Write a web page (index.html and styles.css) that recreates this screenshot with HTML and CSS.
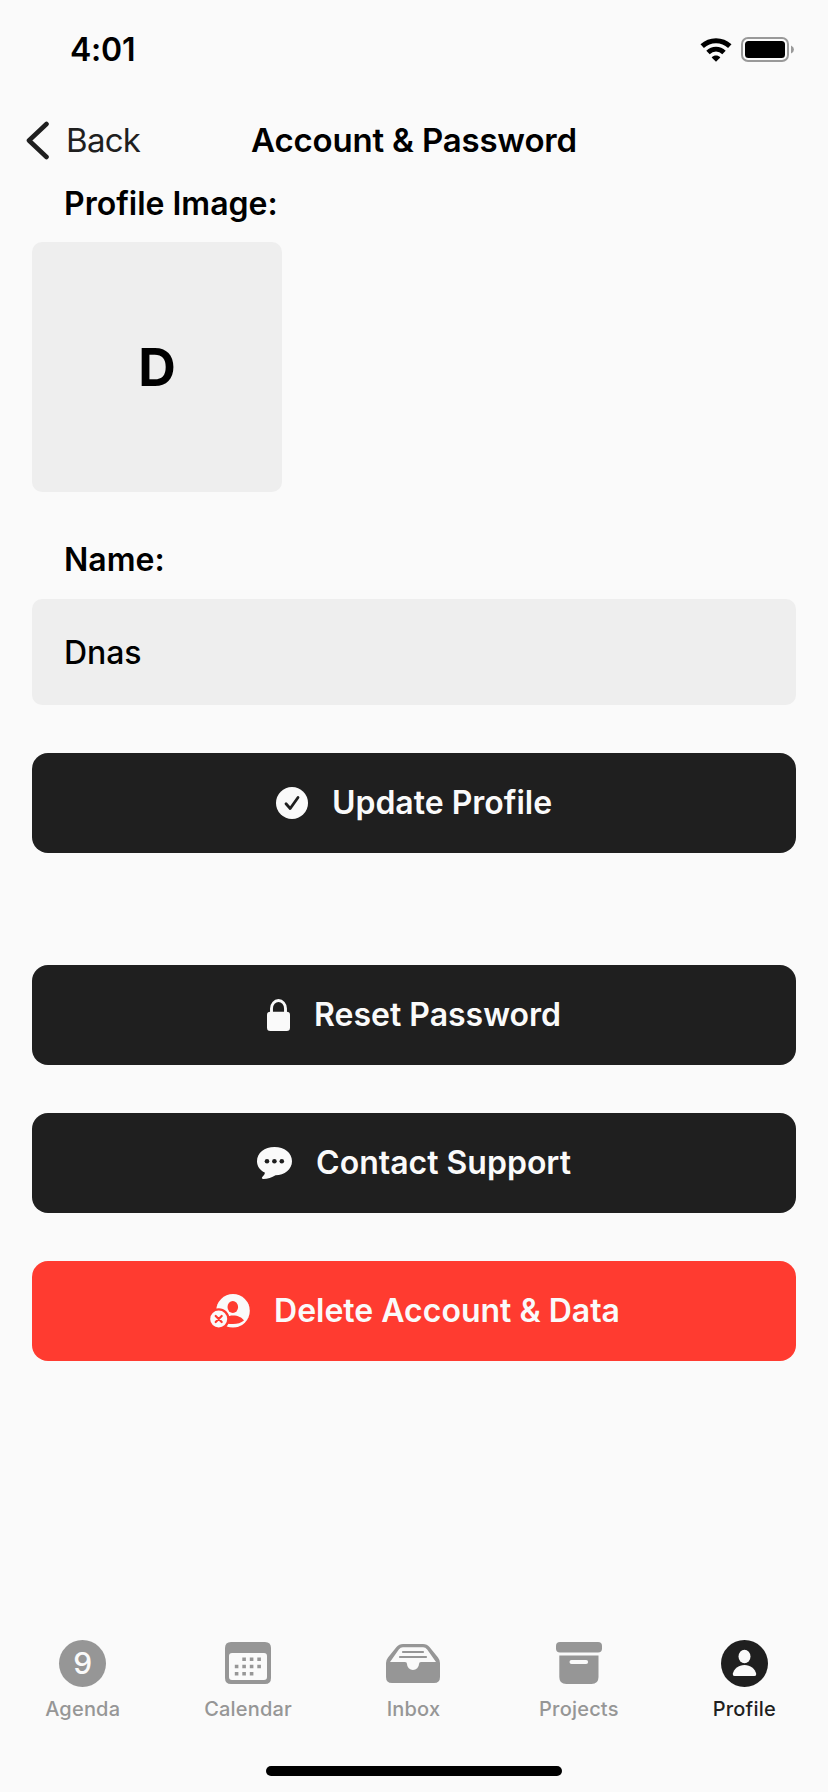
FILE: index.html
```html
<!DOCTYPE html>
<html lang="en">
<head>
<meta charset="utf-8">
<title>Account &amp; Password</title>
<link rel="stylesheet" href="styles.css">
</head>
<body>
<div class="screen">
  <div class="status">
    <span class="time">4:01</span>
    <span class="indicators">
      <svg width="32" height="24" viewBox="0 0 32 24"><path d="M2.2 8.2C10 .9 22 .9 29.8 8.2" fill="none" stroke="#000" stroke-width="5"/><path d="M8 14.5C12.5 10 19.500 10 24 14.500" fill="none" stroke="#000" stroke-width="4.800"/><path d="M11.700 19.400C14 17 18 17 20.300 19.400L16 23.800Z"/></svg>
      <svg width="53" height="25" viewBox="0 0 53 25"><rect x="1" y="1" width="46" height="23" rx="6" fill="none" stroke="#999" stroke-width="2"/><rect x="4" y="4" width="40" height="17" rx="3.500"/><path d="M50 8.500Q53 10 53 12.500T50 16.500Z" fill="#999"/></svg>
    </span>
  </div>
  <header class="nav">
    <a class="back"><svg width="24" height="39" viewBox="0 0 24 39"><path d="M20.500 3 3 19.500l17.500 16.500" fill="none" stroke="#1f1f1f" stroke-width="4.600" stroke-linecap="round" stroke-linejoin="round"/></svg><span>Back</span></a>
    <h1 class="title">Account &amp; Password</h1>
  </header>
  <main class="content">
    <div class="label label-image">Profile Image:</div>
    <div class="avatar">D</div>
    <div class="label label-name">Name:</div>
    <div class="field">Dnas</div>
    <button class="btn btn-update"><svg width="32" height="32" viewBox="0 0 32 32"><circle cx="16" cy="16" r="16" fill="#fafafa"/><path d="M10 16.800 14.200 21.500 22 10.500" fill="none" stroke="#1f1f1f" stroke-width="2.800" stroke-linecap="round" stroke-linejoin="round"/></svg><span>Update Profile</span></button>
    <button class="btn"><svg width="23" height="32" viewBox="0 0 23 32"><path d="M4.500 14V9.500a7 8 0 0 1 14 0V14" fill="none" stroke="#fafafa" stroke-width="2.900"/><rect y="12.800" width="23" height="19.200" rx="3.300" fill="#fafafa"/></svg><span>Reset Password</span></button>
    <button class="btn"><svg width="35" height="32" viewBox="0 0 35 32"><path d="M17.500 0C27.500 0 35 6 35 14.200S27.500 28 18.500 28.200C15 30.500 10.500 32 6.500 32 4.500 32 4.500 30.800 5.500 29.800 7.200 28 8 26.800 7.800 25.600 3 23.300 0 19.300 0 14.200 0 6 7.500 0 17.500 0Z" fill="#fafafa"/><g fill="#1f1f1f"><circle cx="10" cy="14.200" r="2.300"/><circle cx="17.400" cy="14.200" r="2.300"/><circle cx="24.800" cy="14.200" r="2.300"/></g></svg><span>Contact Support</span></button>
    <button class="btn btn-danger"><svg width="40" height="34" viewBox="0 0 40 34"><circle cx="23" cy="16.800" r="16.800" fill="#fafafa"/><ellipse cx="22.800" cy="13" rx="5.300" ry="6" fill="#ff3b30"/><path d="M12 28C14 23.500 18 21.500 23 21.500S32 23.500 34 26.500C31 29 27.500 30 23 30S15 29.500 12 28Z" fill="#ff3b30"/><circle cx="8.700" cy="25" r="10.800" fill="#ff3b30"/><circle cx="8.700" cy="25" r="8.500" fill="#fafafa"/><path d="m5.700 22 6 6m0-6-6 6" stroke="#ff3b30" stroke-width="2.200" stroke-linecap="round"/></svg><span>Delete Account &amp; Data</span></button>
  </main>
  <nav class="tabs">
    <a class="tab"><span class="tab-icon tab-round"><span class="day">9</span></span><span>Agenda</span></a>
    <a class="tab"><span class="tab-icon"><svg width="46" height="42" viewBox="0 0 46 42"><path fill="#969696" fill-rule="evenodd" d="M6 0H40Q46 0 46 6V36Q46 42 40 42H6Q0 42 0 36V6Q0 0 6 0ZM7 11Q4 11 4 14V35Q4 38 7 38H39Q42 38 42 35V14Q42 11 39 11Z"/><path d="M17.300 17.200H36M9.800 24.500H36M9.800 31.800H30" fill="none" stroke="#969696" stroke-width="3.600" stroke-dasharray="3.600 3.900"/></svg></span><span>Calendar</span></a>
    <a class="tab"><span class="tab-icon"><svg width="54" height="39" viewBox="0 0 54 39"><path fill="#969696" fill-rule="evenodd" d="M17 0H37Q41 0 43.500 3L52 13.500Q54 16 54 19V33Q54 39 48 39H6Q0 39 0 33V19Q0 16 2 13.500L10.500 3Q13 0 17 0ZM17 3.200Q14.500 3.200 12.800 5.400L4 18H19Q21 18 21 20A6 6 0 0 0 33 20Q33 18 35 18H50L41.200 5.400Q39.500 3.200 37 3.200Z"/><path d="M17 8H37M14 13H40" stroke="#969696" stroke-width="2.200" stroke-linecap="round"/></svg></span><span>Inbox</span></a>
    <a class="tab"><span class="tab-icon"><svg width="46" height="42" viewBox="0 0 46 42"><rect width="46" height="10.500" rx="4" fill="#969696"/><path fill="#969696" d="M3.300 13.500H42.500V35Q42.500 42 35.500 42H10.300Q3.300 42 3.300 35Z"/><rect x="13.500" y="18" width="18.600" height="4" rx="2" fill="#fafafa"/></svg></span><span>Projects</span></a>
    <a class="tab tab-active"><span class="tab-icon tab-round"><svg width="47" height="47" viewBox="0 0 47 47"><circle cx="23.500" cy="23.500" r="23.500" fill="#1f1f1f"/><ellipse cx="23.500" cy="16.500" rx="6" ry="6.700" fill="#fafafa"/><path d="M13.500 36Q11.500 36 11.800 33.800C13 28.500 17.500 25 23.500 25S34 28.500 35.200 33.800Q35.500 36 33.500 36Z" fill="#fafafa"/></svg></span><span>Profile</span></a>
  </nav>
  <div class="home"></div>
</div>
</body>
</html>
```
FILE: styles.css
```css
* { box-sizing: border-box; }
body { margin: 0; background: #fafafa; }
.screen {
  width: 828px;
  height: 1792px;
  display: flex;
  flex-direction: column;
  background: #fafafa;
  color: #000;
  font-family: Inter, sans-serif;
}
.status {
  height: 99px;
  padding: 0 34px 0 70px;
  display: flex;
  align-items: center;
  justify-content: space-between;
}
.time { padding-top: 1px; font-size: 32px; font-weight: 600; line-height: 40px; letter-spacing: -0.2px; }
.indicators { display: flex; align-items: center; gap: 9px; }
.nav {
  height: 82px;
  padding: 0 26px;
  display: grid;
  grid-template-columns: 1fr auto 1fr;
  align-items: center;
}
.back { display: flex; align-items: center; gap: 16px; color: #1f1f1f; font-size: 33px; font-weight: 400; letter-spacing: -0.7px; }
.title { margin: 0; font-size: 33px; font-weight: 600; line-height: 40px; letter-spacing: -0.18px; }
.content { display: flex; flex-direction: column; padding: 0 32px; }
.label { padding-left: 32px; font-size: 32px; font-weight: 600; line-height: 40px; }
.label-image { margin: 3px 0 18px; }
.label-name { margin: 48px 0 19px; }
.avatar {
  width: 250px;
  height: 250px;
  display: flex;
  align-items: center;
  justify-content: center;
  border-radius: 10px;
  background: #eee;
  font-size: 52px;
  font-weight: 700;
}
.field {
  height: 106px;
  padding: 1px 0 0 32px;
  border-radius: 10px;
  background: #eee;
  font-size: 32px;
  font-weight: 500;
  line-height: 106px;
  letter-spacing: -0.1px;
}
.btn {
  height: 100px;
  margin: 48px 0 0;
  padding: 0;
  display: flex;
  align-items: center;
  justify-content: center;
  gap: 24px;
  border: 0;
  border-radius: 16px;
  background: #1f1f1f;
  color: #fafafa;
  font-family: inherit;
  font-size: 32px;
  font-weight: 600;
}
.btn span { padding-bottom: 2px; }
.btn-update { margin-bottom: 64px; }
.btn-danger { padding-left: 2px; background: #ff3b30; }
.tabs {
  margin-top: auto;
  height: 126px;
  padding-right: 1px;
  display: grid;
  grid-template-columns: repeat(5, 1fr);
}
.tab {
  display: flex;
  flex-direction: column;
  align-items: center;
  gap: 10px;
  color: #969696;
  font-size: 20px;
  font-weight: 500;
  line-height: 26px;
  letter-spacing: 0.2px;
}
.tab-active { color: #1f1f1f; }
.tab-icon { height: 46px; display: flex; align-items: center; }
.tab-round { align-items: flex-start; }
.day {
  width: 47px;
  height: 47px;
  border-radius: 50%;
  background: #969696;
  color: #fafafa;
  font-size: 30px;
  font-weight: 500;
  line-height: 47px;
  letter-spacing: 0;
  text-align: center;
}
.home { width: 296px; height: 10px; margin: 0 auto 16px; border-radius: 5px; background: #000; }
```
